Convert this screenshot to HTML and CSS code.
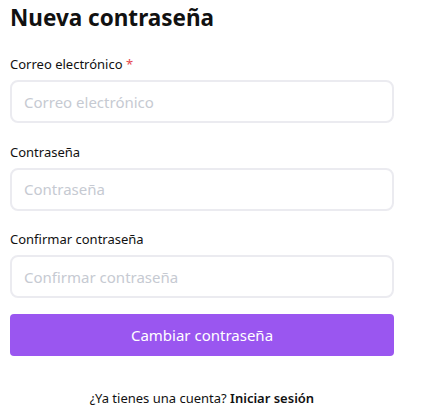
FILE: index.html
```html
<!DOCTYPE html>
<html lang="es">
<head>
<meta charset="utf-8">
<link rel="stylesheet" href="styles.css">
</head>
<body>
<div class="page">
  <h1 class="title">Nueva contraseña</h1>
  <form class="form">
    <div class="field">
      <label class="label">Correo electrónico <span class="req">*</span></label>
      <input class="input" type="email" placeholder="Correo electrónico">
    </div>
    <div class="field">
      <label class="label">Contraseña</label>
      <input class="input" type="password" placeholder="Contraseña">
    </div>
    <div class="field">
      <label class="label">Confirmar contraseña</label>
      <input class="input" type="password" placeholder="Confirmar contraseña">
    </div>
    <button class="btn" type="button">Cambiar contraseña</button>
  </form>
  <p class="footer">¿Ya tienes una cuenta? <a class="link">Iniciar sesión</a></p>
</div>
</body>
</html>
```
FILE: styles.css
```css
* { box-sizing: border-box; }
body {
  margin: 0;
  background: #fff;
  font-family: "Noto Sans", "Open Sans", sans-serif;
  color: #111;
}
.page {
  width: 404px;
  padding: 0 10px;
}
.title {
  margin: 0;
  font-size: 22.5px;
  line-height: 36px;
  font-weight: 700;
  color: #111;
}
.form {
  margin-top: 18px;
  display: flex;
  flex-direction: column;
}
.field {
  display: flex;
  flex-direction: column;
  margin-bottom: 18.5px;
}
.label {
  font-size: 13px;
  line-height: 20px;
  margin-bottom: 6px;
  color: #111;
}
.req { color: #e5484d; }
.input {
  height: 43px;
  border: 2px solid #ebebf0;
  border-radius: 8px;
  padding: 0 12px;
  font-family: inherit;
  font-size: 15px;
  color: #111;
  outline: none;
}
.input::placeholder { color: #c6cad2; }
.btn {
  margin-top: -3px;
  height: 42px;
  border: none;
  border-radius: 4px;
  background: #9a56f0;
  color: #fff;
  font-family: inherit;
  font-size: 15px;
}
.footer {
  margin: 32px 0 0;
  text-align: center;
  font-size: 13px;
  line-height: 20px;
  color: #111;
}
.link {
  font-weight: 600;
  color: #111;
}
```
